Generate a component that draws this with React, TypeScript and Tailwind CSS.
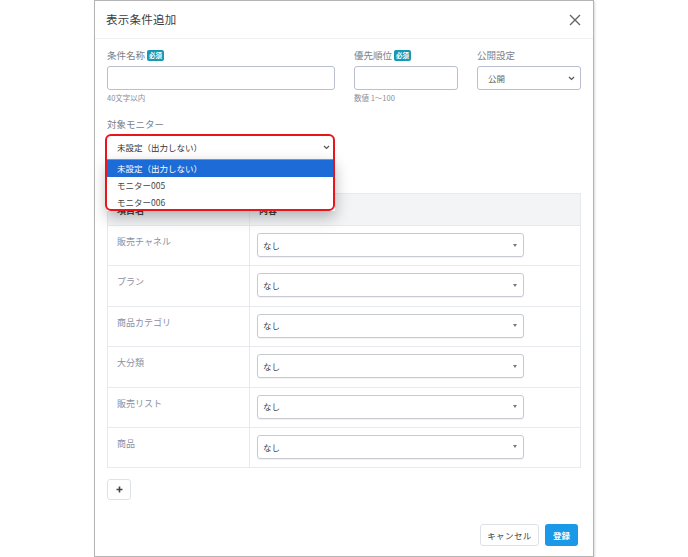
import React from 'react';

const rows = ['販売チャネル', 'プラン', '商品カテゴリ', '大分類', '販売リスト', '商品'];

function Required() {
  return (
    <span className="inline-flex items-center justify-center h-[11px] px-[2px] rounded-[2px] bg-[#1898b2] text-white text-[6.5px] font-bold leading-none">
      必須
    </span>
  );
}

function Chevron() {
  return (
    <svg width="7" height="5" viewBox="0 0 7 5" className="text-[#555]">
      <path d="M1 1 L3.5 3.5 L6 1" fill="none" stroke="currentColor" strokeWidth="1.2" />
    </svg>
  );
}

export default function App() {
  return (
    <div className="w-[688px] h-[557px] bg-white flex justify-center font-['Noto_Sans_CJK_JP','Noto_Sans',sans-serif]">
      <div className="w-[500px] h-[557px] border border-[#b4b4b4] bg-white flex flex-col shadow-[1px_1px_2px_rgba(0,0,0,0.15)]">
        {/* Header */}
        <div className="h-[38px] shrink-0 flex items-center justify-between pl-[11px] pr-[12px] border-b border-[#eef0f3]">
          <h2 className="text-[11.5px] text-[#3d3d3d] tracking-[0.02em]">表示条件追加</h2>
          <svg width="12" height="12" viewBox="0 0 12 12">
            <path d="M1 1 L11 11 M11 1 L1 11" stroke="#666" strokeWidth="1.4" />
          </svg>
        </div>

        <div className="flex-1 flex flex-col px-[12px]">
          {/* Top fields */}
          <div className="pt-[10px] flex justify-between">
            <div className="w-[228px]">
              <div className="h-[12px] flex items-center gap-[2px] text-[9.5px] text-[#7b7f8c]">
                条件名称 <Required />
              </div>
              <div className="mt-[5px] h-[24px] border border-[#b9bfcf] rounded-[3px]" />
              <div className="mt-[3px] text-[7.5px] leading-[10px] text-[#8a8d96]">40文字以内</div>
            </div>
            <div className="w-[104px]">
              <div className="h-[12px] flex items-center gap-[2px] text-[9.5px] text-[#7b7f8c]">
                優先順位 <Required />
              </div>
              <div className="mt-[5px] h-[24px] border border-[#b9bfcf] rounded-[3px]" />
              <div className="mt-[3px] text-[7.5px] leading-[10px] text-[#8a8d96]">数値 1〜100</div>
            </div>
            <div className="w-[104px]">
              <div className="h-[12px] flex items-center text-[9.5px] text-[#7b7f8c]">公開設定</div>
              <div className="mt-[5px] h-[24px] border border-[#b9bfcf] rounded-[3px] flex items-center justify-between pl-[10px] pr-[5px] text-[8.5px] text-[#666]">
                公開
                <Chevron />
              </div>
            </div>
          </div>

          {/* Target monitor */}
          <div className="mt-[15px] h-[12px] flex items-center text-[9.5px] text-[#7b7f8c]">対象モニター</div>
          <div className="relative mt-[6px] w-[228px] z-10">
            <div className="h-[23px] flex items-center justify-between pl-[10px] pr-[5px] text-[8.5px] text-[#333]">
              未設定（出力しない）
              <Chevron />
            </div>
            <div className="absolute left-0 top-[23px] w-[228px] bg-white border-t border-[#6b97d6] shadow-[0_6px_14px_rgba(0,0,0,0.28)] text-[8.5px]">
              <div className="h-[17px] flex items-center pl-[10px] bg-[#1c6bd6] text-white">未設定（出力しない）</div>
              <div className="h-[17px] flex items-center pl-[10px] text-[#444]">モニター005</div>
              <div className="h-[17px] flex items-center pl-[10px] text-[#444]">モニター006</div>
            </div>
            <div className="absolute left-[-2px] top-[-2px] w-[230px] h-[77px] border-2 border-[#e8151b] rounded-[6px] pointer-events-none" />
          </div>

          {/* Table */}
          <div className="mt-[34px] border border-[#e6e9ef]">
            <div className="h-[31px] flex bg-[#f3f4f6] text-[9px] text-[#444] font-bold">
              <div className="w-[142px] pl-[9px] flex items-end pb-[8px] border-r border-[#e6e9ef]">項目名</div>
              <div className="flex-1 pl-[9px] flex items-end pb-[8px]">内容</div>
            </div>
            {rows.map((r) => (
              <div key={r} className="h-[40.4px] flex border-t border-[#e6e9ef]">
                <div className="w-[142px] pl-[9px] pt-[9px] text-[9px] text-[#8b8fa3] border-r border-[#e6e9ef]">{r}</div>
                <div className="flex-1 pl-[7px] pt-[7px]">
                  <div className="w-[267px] h-[24px] border border-[#c7cad1] rounded-[3px] flex items-center justify-between pl-[5px] pr-[6px] text-[8.5px] text-[#444] shadow-[0_1px_1px_rgba(0,0,0,0.06)]">
                    なし
                    <span className="w-0 h-0 border-l-[2.5px] border-r-[2.5px] border-t-[3px] border-l-transparent border-r-transparent border-t-[#777]" />
                  </div>
                </div>
              </div>
            ))}
          </div>

          {/* Add button */}
          <button className="mt-[11px] w-[24px] h-[21px] border border-[#dde2ea] rounded-[3px] flex items-center justify-center text-[#444]">
            <svg width="7" height="7" viewBox="0 0 7 7">
              <path d="M3.5 0.5 V6.5 M0.5 3.5 H6.5" stroke="#444" strokeWidth="1.6" />
            </svg>
          </button>

          {/* Footer */}
          <div className="mt-auto mb-[10px] flex justify-end gap-[6px] pr-[3px]">
            <button className="h-[22px] w-[59px] border border-[#dde2ea] rounded-[3px] text-[8.5px] text-[#444] tracking-[0.05em]">
              キャンセル
            </button>
            <button className="h-[22px] w-[33px] rounded-[3px] bg-[#1a99e8] text-white text-[8.5px] font-bold">
              登録
            </button>
          </div>
        </div>
      </div>
    </div>
  );
}
